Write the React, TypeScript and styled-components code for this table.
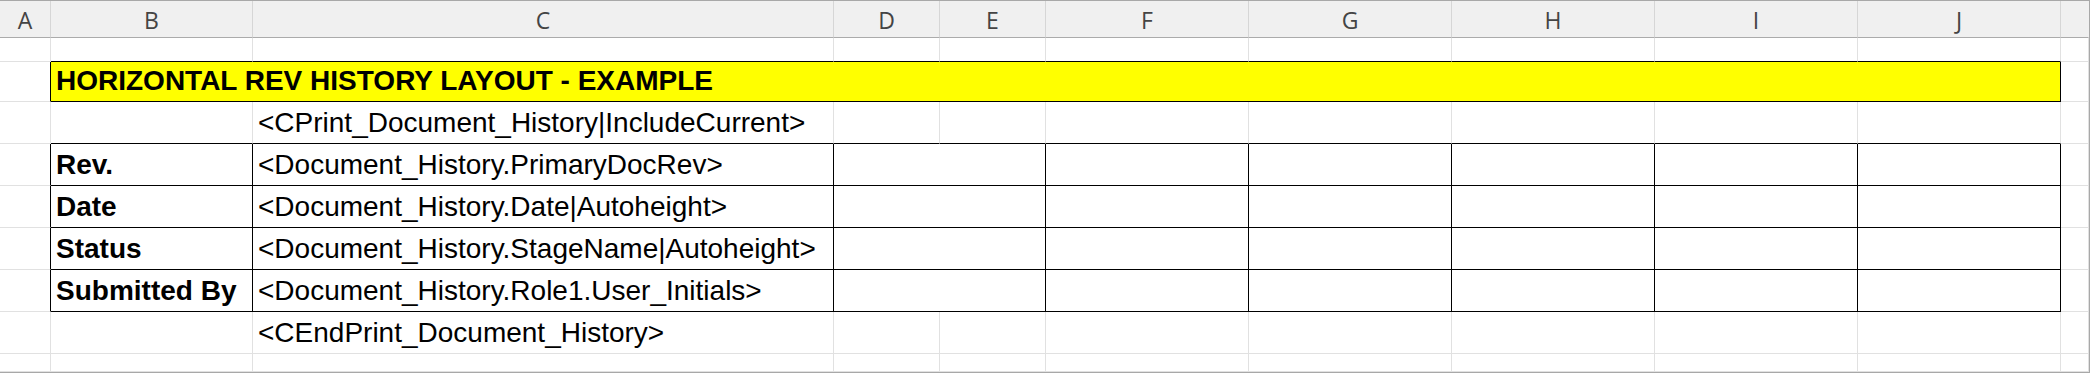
import * as React from 'react';
import styled, { createGlobalStyle } from 'styled-components';

const GRID = '#e1e1e1';
const INK = '#000000';

const GlobalStyle = createGlobalStyle`
  html, body {
    margin: 0;
    padding: 0;
    background: #ffffff;
  }
`;

// column widths include the 1px line on the right edge of each column
const COLUMNS = ['A', 'B', 'C', 'D', 'E', 'F', 'G', 'H', 'I', 'J', ''];
const COLUMN_WIDTHS = '51px 202px 581px 106px 106px 203px 203px 203px 203px 203px 1fr';

const Sheet = styled.div`
  box-sizing: border-box;
  width: 100vw;
  height: 373px;
  border: 1px solid #a8a8a8;
  border-left: none;
  display: grid;
  grid-template-columns: ${COLUMN_WIDTHS};
  grid-template-rows: 37px 24px 40px repeat(6, 42px) 1fr;
  overflow: hidden;
`;

const ColumnHeader = styled.div<{ $last?: boolean }>`
  box-sizing: border-box;
  display: flex;
  align-items: center;
  justify-content: center;
  background: #f0f0f0;
  border-bottom: 1px solid #ababab;
  border-right: 1px solid ${(p) => (p.$last ? '#f0f0f0' : '#d6d6d6')};
  font-family: 'Open Sans', 'Noto Sans', sans-serif;
  font-size: 23px;
  color: #444444;
  padding-top: 1px;
`;

const Cell = styled.div<{ $right?: string; $bottom?: string; $bold?: boolean; $fill?: string; $span?: number }>`
  box-sizing: border-box;
  grid-column: span ${(p) => p.$span ?? 1};
  background: ${(p) => p.$fill ?? '#ffffff'};
  border-right: 1px solid ${(p) => p.$right ?? GRID};
  border-bottom: 1px solid ${(p) => p.$bottom ?? GRID};
  padding: 0 5px 3px 5px;
  font-family: 'Liberation Sans', Arial, sans-serif;
  font-size: 28px;
  font-weight: ${(p) => (p.$bold ? 700 : 400)};
  color: #000000;
  white-space: nowrap;
  overflow: visible;
  display: flex;
  align-items: flex-end;
  line-height: 34px;
`;

type CellSpec = {
  text?: string;
  bold?: boolean;
  span?: number;
  fill?: string;
  right?: string;
  bottom?: string;
};

// a plain row: eleven empty cells with the standard gridlines
function blankRow(): CellSpec[] {
  return COLUMNS.map(() => ({}));
}

const titleRow: CellSpec[] = [
  { right: INK },
  { text: 'HORIZONTAL REV HISTORY LAYOUT - EXAMPLE', bold: true, span: 9, fill: '#ffff00', right: INK, bottom: INK },
  {},
];

// row above the title: black bottom edge across B..J
const aboveTitle: CellSpec[] = COLUMNS.map((_, i) => (i >= 1 && i <= 9 ? { bottom: INK } : {}));

// row above the table: holds the print tag, with the table's top edge under it
const printRow: CellSpec[] = COLUMNS.map((_, i) => {
  if (i === 2) return { text: '<CPrint_Document_History|IncludeCurrent>', bottom: INK };
  if (i >= 1 && i <= 9) return { bottom: INK };
  return {};
});

function tableRow(label: string, value: string): CellSpec[] {
  return [
    { right: INK },
    { text: label, bold: true, right: INK, bottom: INK },
    { text: value, right: INK, bottom: INK },
    { span: 2, right: INK, bottom: INK },
    { right: INK, bottom: INK },
    { right: INK, bottom: INK },
    { right: INK, bottom: INK },
    { right: INK, bottom: INK },
    { right: INK, bottom: INK },
    {},
  ];
}

const endRow: CellSpec[] = COLUMNS.map((_, i) =>
  i === 2 ? { text: '<CEndPrint_Document_History>' } : {}
);

const rows: CellSpec[][] = [
  aboveTitle,
  titleRow,
  printRow,
  tableRow('Rev.', '<Document_History.PrimaryDocRev>'),
  tableRow('Date', '<Document_History.Date|Autoheight>'),
  tableRow('Status', '<Document_History.StageName|Autoheight>'),
  tableRow('Submitted By', '<Document_History.Role1.User_Initials>'),
  endRow,
  blankRow(),
];

export default function App() {
  return (
    <>
      <GlobalStyle />
      <Sheet>
        {COLUMNS.map((c, i) => (
          <ColumnHeader key={`h${i}`} $last={i === COLUMNS.length - 1}>
            {c}
          </ColumnHeader>
        ))}
        {rows.map((row, r) =>
          row.map((cell, c) => (
            <Cell
              key={`${r}-${c}`}
              $span={cell.span}
              $bold={cell.bold}
              $fill={cell.fill}
              $right={cell.right}
              $bottom={cell.bottom}
            >
              {cell.text}
            </Cell>
          ))
        )}
      </Sheet>
    </>
  );
}
